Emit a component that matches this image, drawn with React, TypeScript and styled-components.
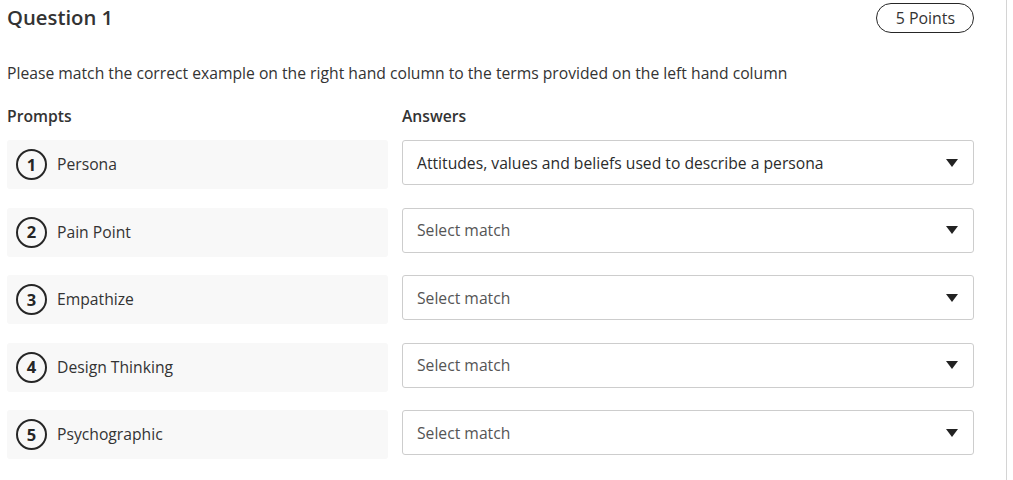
import React from "react";
import styled, { createGlobalStyle } from "styled-components";

const Global = createGlobalStyle`
  html, body { margin: 0; padding: 0; background: #fff; }
  body { font-family: "Open Sans", "Liberation Sans", sans-serif; color: #333; }
`;

const Page = styled.div`
  width: 1007px;
  height: 480px;
  box-sizing: border-box;
  border-right: 1px solid #d4d4d4;
  padding: 3px 32px 0 7px;
`;

const Header = styled.div`
  display: flex;
  justify-content: space-between;
  align-items: flex-start;
  height: 30px;
`;

const Title = styled.h2`
  margin: 0;
  font-size: 20.3px;
  font-weight: 600;
  color: #333;
  line-height: 28px;
`;

const Pill = styled.div`
  box-sizing: border-box;
  height: 30px;
  padding: 0 18px 0 19px;
  border: 1px solid #262626;
  border-radius: 15px;
  display: flex;
  align-items: center;
  font-size: 15.9px;
  color: #333;
`;

const Instruction = styled.p`
  margin: 29px 0 0;
  font-size: 15.7px;
  line-height: 22px;
  color: #333;
`;

const Grid = styled.div`
  display: grid;
  grid-template-columns: 381px 1fr;
  column-gap: 14px;
  row-gap: 18.5px;
  align-items: start;
`;

const ColHead = styled.div`
  font-size: 15.7px;
  font-weight: 600;
  line-height: 22px;
  color: #333;
`;

const HeadRow = styled(Grid)`
  margin-top: 21px;
  margin-bottom: 13px;
`;

const Prompt = styled.div`
  height: 49px;
  background: #f8f8f8;
  border-radius: 3px;
  display: flex;
  align-items: center;
  padding-left: 9px;
  gap: 10px;
  font-size: 15.7px;
  line-height: 22px;
  color: #333;
  & > span:last-child { margin-top: -1px; }
`;

const Badge = styled.span`
  box-sizing: border-box;
  width: 31px;
  height: 31px;
  border: 2px solid #262626;
  border-radius: 50%;
  display: flex;
  align-items: center;
  justify-content: center;
  font-size: 16.5px;
  font-weight: 700;
  color: #262626;
`;

const Select = styled.div<{ $filled?: boolean }>`
  box-sizing: border-box;
  height: 45px;
  border: 1px solid #cdcdcd;
  border-radius: 3px;
  background: #fff;
  display: flex;
  align-items: center;
  justify-content: space-between;
  padding: 0 15px 0 14px;
  font-size: 15.7px;
  color: ${(p) => (p.$filled ? "#2b2b2b" : "#555")};
`;

const Caret = () => (
  <svg width="12" height="8" viewBox="0 0 12 8" aria-hidden>
    <path d="M0 0 H12 L6 8 Z" fill="#222" />
  </svg>
);

const rows = [
  { n: 1, prompt: "Persona", answer: "Attitudes, values and beliefs used to describe a persona" },
  { n: 2, prompt: "Pain Point", answer: "" },
  { n: 3, prompt: "Empathize", answer: "" },
  { n: 4, prompt: "Design Thinking", answer: "" },
  { n: 5, prompt: "Psychographic", answer: "" },
];

export default function App() {
  return (
    <>
      <Global />
      <Page>
        <Header>
          <Title>Question 1</Title>
          <Pill>5 Points</Pill>
        </Header>
        <Instruction>
          Please match the correct example on the right hand column to the terms provided on the left hand column
        </Instruction>
        <HeadRow>
          <ColHead>Prompts</ColHead>
          <ColHead>Answers</ColHead>
        </HeadRow>
        <Grid>
          {rows.map((r) => (
            <React.Fragment key={r.n}>
              <Prompt>
                <Badge>{r.n}</Badge>
                <span>{r.prompt}</span>
              </Prompt>
              <Select $filled={!!r.answer}>
                <span>{r.answer || "Select match"}</span>
                <Caret />
              </Select>
            </React.Fragment>
          ))}
        </Grid>
      </Page>
    </>
  );
}
